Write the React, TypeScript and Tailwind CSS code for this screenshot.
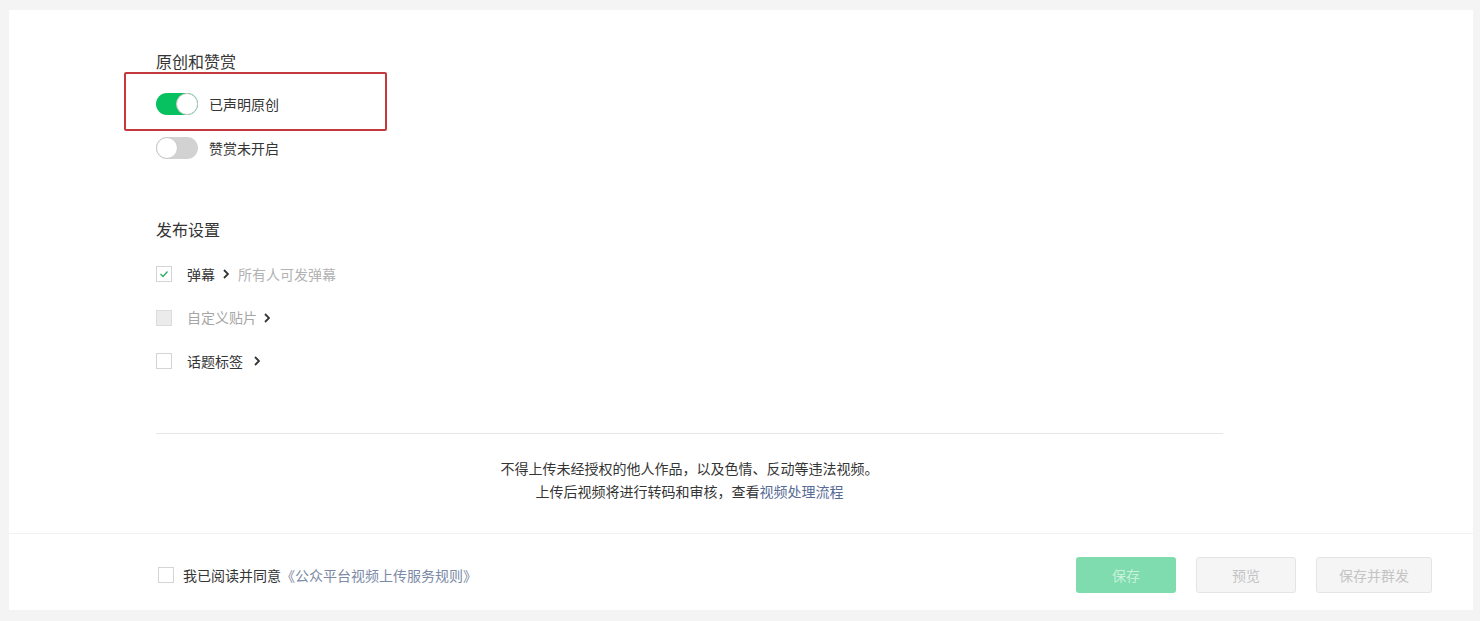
import React, { useState } from 'react';

const font = { fontFamily: '"Noto Sans CJK SC", "Noto Sans", sans-serif' };

const Toggle: React.FC<{ on: boolean; onClick: () => void }> = ({ on, onClick }) => (
  <button
    onClick={onClick}
    className={`relative h-[22px] w-[42px] shrink-0 rounded-full ${on ? 'bg-[#07c160]' : 'bg-[#d2d2d2]'}`}
  >
    <span
      className={`absolute top-0 h-[22px] w-[22px] rounded-full border border-[#c9c9c9] bg-white ${
        on ? 'left-[20px]' : 'left-0'
      }`}
    />
  </button>
);

const Chevron: React.FC = () => (
  <svg width="6" height="10" viewBox="0 0 6 10" className="ml-[8px] shrink-0">
    <path d="M1 1l4 4-4 4" fill="none" stroke="#353535" strokeWidth="1.8" />
  </svg>
);

type BoxState = 'checked' | 'disabled' | 'empty';

const Box: React.FC<{ state: BoxState }> = ({ state }) => (
  <span
    className={`flex h-[16px] w-[16px] shrink-0 items-center justify-center border ${
      state === 'disabled' ? 'border-[#dcdcdc] bg-[#ebebeb]' : 'border-[#d4d4d4] bg-white'
    }`}
  >
    {state === 'checked' && (
      <svg width="10" height="8" viewBox="0 0 10 8">
        <path d="M1.5 4l2.5 2.5 4.5-5" fill="none" stroke="#2aae67" strokeWidth="1.3" />
      </svg>
    )}
  </span>
);

export default function App() {
  const [original, setOriginal] = useState(true);
  const [reward, setReward] = useState(false);
  const [agree, setAgree] = useState(false);

  return (
    <div className="h-[621px] bg-[#f4f4f4] pl-[9px] pr-[7px] pt-[10px] text-[14px] text-[#353535]" style={font}>
      <div className="flex h-[600px] flex-col bg-white">
        <div className="h-[523px] pl-[147px] pt-[40px]">
          <div className="w-[1067px]">
            <h3 className="text-[16px] leading-[22px] text-[#353535]">原创和赞赏</h3>

            <div className="relative mt-[21px] flex h-[22px] items-center">
              <Toggle on={original} onClick={() => setOriginal(!original)} />
              <span className="ml-[11px]">{original ? '已声明原创' : '未声明原创'}</span>
              <div className="pointer-events-none absolute left-[-32px] top-[-21px] h-[59px] w-[263px] rounded-[2px] border-2 border-[#c43a3c]" />
            </div>

            <div className="mt-[22px] flex h-[22px] items-center">
              <Toggle on={reward} onClick={() => setReward(!reward)} />
              <span className="ml-[11px]">{reward ? '赞赏已开启' : '赞赏未开启'}</span>
            </div>

            <h3 className="mt-[59px] text-[16px] leading-[22px]">发布设置</h3>

            <div className="mt-[23px] flex flex-col gap-[21.5px]">
              <div className="flex h-[22px] items-center">
                <Box state="checked" />
                <span className="ml-[15px]">弹幕</span>
                <Chevron />
                <span className="ml-[9px] text-[#b2b2b2]">所有人可发弹幕</span>
              </div>
              <div className="flex h-[22px] items-center">
                <Box state="disabled" />
                <span className="ml-[15px] text-[#a6a6a6]">自定义贴片</span>
                <span className="-ml-[1px]"><Chevron /></span>
              </div>
              <div className="flex h-[22px] items-center">
                <Box state="empty" />
                <span className="ml-[15px]">话题标签</span>
                <span className="ml-[3px]"><Chevron /></span>
              </div>
            </div>

            <div className="mt-[61px] border-t border-[#e7e7e7]" />

            <div className="mt-[23px] text-center text-[14px] leading-[23px]">
              <p>不得上传未经授权的他人作品，以及色情、反动等违法视频。</p>
              <p>
                上传后视频将进行转码和审核，查看<a className="text-[#576b95]">视频处理流程</a>
              </p>
            </div>
          </div>
        </div>

        <div className="flex flex-1 items-center justify-between border-t border-[#f1f1f1] pl-[149px] pr-[41px] pt-[6px]">
          <label className="flex cursor-pointer items-center" onClick={() => setAgree(!agree)}>
            <Box state={agree ? 'checked' : 'empty'} />
            <span className="ml-[9px]">我已阅读并同意</span>
            <span className="text-[#7b8aa6]">《公众平台视频上传服务规则》</span>
          </label>
          <div className="flex gap-[20px]">
            <button className="h-[36px] w-[100px] rounded-[3px] bg-[#7fdcae] text-[#c9f1dc]">保存</button>
            <button className="h-[36px] w-[100px] rounded-[3px] border border-[#e4e4e4] bg-[#f5f5f5] text-[#c4c4c4]">
              预览
            </button>
            <button className="h-[36px] w-[116px] rounded-[3px] border border-[#e4e4e4] bg-[#f5f5f5] text-[#c4c4c4]">
              保存并群发
            </button>
          </div>
        </div>
      </div>
    </div>
  );
}
